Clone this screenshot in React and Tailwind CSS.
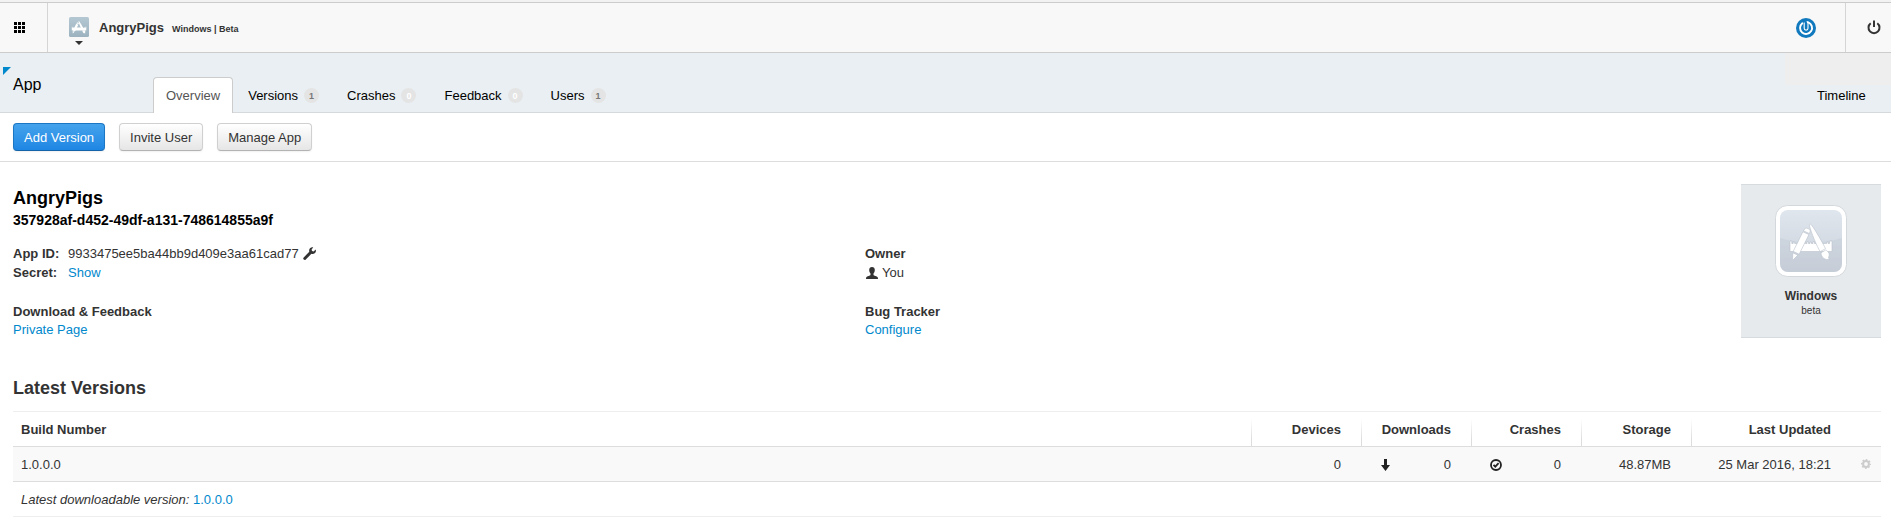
import React from 'react';

function ToolsGlyph({ stroke = 'none' }) {
  return (
    <g fill="#fff" stroke={stroke} strokeWidth="0.6" strokeLinejoin="round">
      <path d="M0 17h1.800v2.500h1.400V18h1.500v1.500H14V18h1.400v1.500h1.600V17.500h1.400v2H20V18h1.400v1.500H23v-2h1.400v2H26V18h1.400v1.500h9.200V18h1.500v1.500h1.500V17H42v10.500H0z" />
      <path d="M12.900 7.800l6 2.800L9.200 30.200l-6-2.800z" />
      <path d="M15.200 4.400c1-1 5.200.9 5.100 2.500L19.400 9.600l-6-2.800z" />
      <path d="M2.800 28.800l5 2.300-4.100 4.200c-.6.5-1.200.1-1.100-.5z" />
      <path d="M20 .2c.6-.3 1 .2 1.400.7 3.300 4 11.900 18.900 14.100 23.800l-5.300 2.900C27.200 23 20.900 8 19.700 2.400c-.2-1-.2-1.900.3-2.200z" />
      <path d="M31 28.800l4.800-2.800c2.600 1.400 4.300 4.100 3 6.600-.5 1.200-.4 2 .9 2.700-4.500 1-8.500-1.500-8.700-6.500z" />
    </g>
  );
}

function AppBadge() {
  return (
    <svg width="20" height="20" viewBox="0 0 20 20" aria-hidden="true">
      <defs>
        <linearGradient id="badge" x1="0" y1="0" x2="0" y2="1">
          <stop offset="0" stopColor="#b4c8d3" />
          <stop offset="1" stopColor="#9cb3bf" />
        </linearGradient>
      </defs>
      <rect width="20" height="20" rx="1.500" fill="url(#badge)" />
      <g transform="translate(2.800 4) scale(0.345)">
        <ToolsGlyph />
      </g>
    </svg>
  );
}

function AppArtwork() {
  return (
    <svg className="block" width="72" height="72" viewBox="0 0 72 72" aria-hidden="true">
      <defs>
        <linearGradient id="art" x1="0" y1="0" x2="0" y2="1">
          <stop offset="0" stopColor="#dfe6ee" />
          <stop offset="1" stopColor="#cbd1da" />
        </linearGradient>
      </defs>
      <rect x="0.5" y="0.5" width="71" height="71" rx="12" fill="#fff" stroke="#d3d8dc" />
      <rect x="5" y="5" width="62" height="62" rx="8" fill="url(#art)" />
      <path d="M5 33q31 9 62 0v26a8 8 0 0 1-8 8H13a8 8 0 0 1-8-8z" fill="#b9c3d0" opacity="0.3" />
      <g transform="translate(15 19)">
        <ToolsGlyph stroke="#b9c1cb" />
      </g>
    </svg>
  );
}

function Tab({ label, count, active }) {
  return (
    <a
      href="#"
      className={
        active
          ? '-mb-px flex h-9 items-center rounded-t border border-b-0 border-[#ccc] bg-white px-3 pt-px text-[#555]'
          : 'flex h-[35px] items-center gap-1.5 px-[13px] pt-0.5 text-black'
      }
    >
      {label}
      {count !== undefined && (
        <span
          className={
            count > 0
              ? 'flex size-[15px] items-center justify-center rounded-full bg-[#e4e4e4] text-[9px] font-bold text-[#777]'
              : 'flex size-[15px] items-center justify-center rounded-full bg-[#e4e4e4] text-[9px] font-bold text-white'
          }
        >
          {count}
        </span>
      )}
    </a>
  );
}

function HeadCell({ children }) {
  return (
    <th
      scope="col"
      className="bg-[linear-gradient(to_bottom,#fff_20%,#ddd_80%)] bg-[length:1px_100%] bg-no-repeat pt-2 pr-5 pb-1.5 text-right"
    >
      {children}
    </th>
  );
}

const plainButton =
  'h-7 rounded border border-[#d0d0d0] border-b-[#b3b3b3] bg-linear-to-b from-white to-[#e6e6e6] px-2.5 pt-0.5 text-[#333] shadow-[0_1px_2px_rgba(0,0,0,0.06)]';

export default function App() {
  return (
    <div className="bg-white font-['Liberation_Sans',Arial,sans-serif] text-[13px] leading-5 text-[#333]">
      <header className="flex h-[53px] border-b border-[#ccc] bg-[#f8f8f8] shadow-[inset_0_2px_0_#f2f2f2,inset_0_3px_0_#ccc]">
        <button type="button" aria-label="All apps" className="mt-[3px] flex w-12 items-center border-r border-[#d5d5d5] pl-3.5">
          <svg width="11" height="11" viewBox="0 0 11 11" fill="#000">
            <path d="M0 0h3v3H0zM4 0h3v3H4zM8 0h3v3H8zM0 4h3v3H0zM4 4h3v3H4zM8 4h3v3H8zM0 8h3v3H0zM4 8h3v3H4zM8 8h3v3H8z" />
          </svg>
        </button>
        <button type="button" aria-label="Switch app" className="mt-[17px] ml-[21px] flex flex-col items-center gap-1 self-start">
          <AppBadge />
          <svg width="8" height="4" viewBox="0 0 8 4" fill="#333">
            <path d="M0 0h8L4 4z" />
          </svg>
        </button>
        <div className="mt-[18px] ml-2.5 flex items-baseline gap-2 self-start font-bold">
          <span>AngryPigs</span>
          <span className="text-[9px]">Windows | Beta</span>
        </div>
        <div className="mt-[3px] ml-auto flex">
          <a href="#" aria-label="Profile" className="flex items-center pr-[29px]">
            <svg width="20" height="20" viewBox="0 0 20 20" fill="none">
              <circle cx="10" cy="10" r="10" fill="#1179bd" />
              <path d="M6.300 5.300a6 6 0 1 0 6-.9l-1.600-.4" stroke="#fff" strokeWidth="1.900" strokeLinecap="round" />
              <path d="M8.200 4.600v5.600a1.900 1.900 0 0 0 3.800 0V5" stroke="#fff" strokeWidth="1.100" />
              <path d="M10 4v6" stroke="#1179bd" strokeWidth="1.800" strokeLinecap="round" />
            </svg>
          </a>
          <button type="button" aria-label="Sign out" className="flex w-[46px] items-center border-l border-[#d5d5d5] pl-[21px]">
            <svg width="14" height="15" viewBox="0 0 14 15" fill="none" stroke="#333" strokeWidth="2">
              <path d="M3.700 3.300a5.500 5.500 0 1 0 6.600 0" />
              <path d="M7 0.500v6.500" />
            </svg>
          </button>
        </div>
      </header>

      <div className="flex h-[60px] border-b border-[#d5d9db] bg-[#e9eff2]">
        <div className="flex w-[153px] items-start pt-3.5 pl-[3px]">
          <svg width="8" height="8" viewBox="0 0 8 8" fill="#0088cc" aria-hidden="true">
            <path d="M0 0h8L0 8z" />
          </svg>
          <h2 className="mt-1.5 ml-0.5 text-base leading-6 text-black">App</h2>
        </div>
        <nav className="flex items-end gap-0.5 self-end">
          <Tab label="Overview" active />
          <Tab label="Versions" count={1} />
          <Tab label="Crashes" count={0} />
          <Tab label="Feedback" count={0} />
          <Tab label="Users" count={1} />
        </nav>
        <div className="ml-auto flex w-[106px] flex-col">
          <div className="h-8 bg-[#eee]" />
          <a href="#" className="pt-px pl-8 text-black">Timeline</a>
        </div>
      </div>

      <div className="flex gap-3.5 border-b border-[#ddd] px-[13px] py-2.5">
        <button
          type="button"
          className="h-7 rounded border border-[#1b76c4] border-b-[#1563a8] bg-linear-to-b from-[#44a3ec] to-[#1d86e3] px-2.5 pt-0.5 text-white shadow-[0_1px_2px_rgba(0,0,0,0.06)]"
        >
          Add Version
        </button>
        <button type="button" className={plainButton}>Invite User</button>
        <button type="button" className={plainButton}>Manage App</button>
      </div>

      <main className="pt-[22px] pr-2.5 pl-[13px]">
        <div className="flex items-start gap-6">
          <section className="flex-1">
            <h1 className="text-lg leading-7 font-bold text-black">AngryPigs</h1>
            <p className="text-sm leading-4 font-bold text-black">357928af-d452-49df-a131-748614855a9f</p>
            <div className="mt-4 grid grid-cols-2">
              <dl className="grid grid-cols-[55px_1fr] leading-[19px]">
                <dt className="font-bold">App ID:</dt>
                <dd className="flex items-center gap-1">
                  9933475ee5ba44bb9d409e3aa61cad77
                  <button type="button" aria-label="Edit app ID">
                    <svg width="13" height="13" viewBox="0 0 13 13" fill="#333">
                      <path d="M10.300.3L8.600 2.400l.4 1.700 1.600.3L12.700 2.500c.5 1.400.1 2.900-1 3.800-.9.700-2.200.9-3.300.5L2.800 12.400a1.400 1.400 0 0 1-2.100-2L6.300 4.800C5.900 3.600 6.200 2.200 7 1.300 7.900.3 9.200-.1 10.300.3z" />
                    </svg>
                  </button>
                </dd>
                <dt className="font-bold">Secret:</dt>
                <dd><a href="#" className="text-[#0088cc]">Show</a></dd>
              </dl>
              <div className="leading-[19px]">
                <h3 className="font-bold">Owner</h3>
                <p className="flex items-center gap-1">
                  <svg width="12" height="12" viewBox="0 0 12 12" fill="#333" className="ml-px" aria-hidden="true">
                    <path d="M6 0C4.200 0 3.200 1.100 3.200 2.800c0 1.600.5 2.900 1.300 3.700v1.400C4.300 8.700.9 9.100.3 10.200c-.2.400-.3 1.200-.3 1.800h12c0-.6-.1-1.400-.3-1.800-.6-1.100-4-1.500-4.200-2.300V6.500c.8-.8 1.300-2.100 1.300-3.700C8.800 1.100 7.800 0 6 0z" />
                  </svg>
                  You
                </p>
              </div>
              <div className="mt-[21px] leading-[18px]">
                <h3 className="font-bold">Download &amp; Feedback</h3>
                <a href="#" className="text-[#0088cc]">Private Page</a>
              </div>
              <div className="mt-[21px] leading-[18px]">
                <h3 className="font-bold">Bug Tracker</h3>
                <a href="#" className="text-[#0088cc]">Configure</a>
              </div>
            </div>
          </section>
          <aside className="flex w-[140px] flex-col items-center border-y border-[#d5dbde] bg-[#e7eaed] pt-5 pb-[19px]">
            <AppArtwork />
            <p className="mt-[11px] text-xs leading-4 font-bold">Windows</p>
            <p className="text-[10px] leading-[14px]">beta</p>
          </aside>
        </div>

        <h2 className="mt-[35px] text-lg leading-7 font-bold">Latest Versions</h2>
        <table className="mt-[9px] w-full table-fixed border-collapse">
          <colgroup>
            <col />
            <col className="w-[110px]" />
            <col className="w-[110px]" />
            <col className="w-[110px]" />
            <col className="w-[110px]" />
            <col className="w-[160px]" />
            <col className="w-[30px]" />
          </colgroup>
          <thead>
            <tr className="border-t border-b border-t-[#eee] border-b-[#ddd]">
              <th scope="col" className="pt-2 pb-1.5 pl-2 text-left">Build Number</th>
              <HeadCell>Devices</HeadCell>
              <HeadCell>Downloads</HeadCell>
              <HeadCell>Crashes</HeadCell>
              <HeadCell>Storage</HeadCell>
              <HeadCell>Last Updated</HeadCell>
              <td />
            </tr>
          </thead>
          <tbody>
            <tr className="border-b border-[#ddd] bg-[#f9f9f9]">
              <td className="pt-2 pb-1.5 pl-2">1.0.0.0</td>
              <td className="pt-2 pr-5 pb-1.5 text-right">0</td>
              <td className="pt-2 pr-5 pb-1.5 pl-5">
                <div className="flex items-center justify-between">
                  <svg width="9" height="12" viewBox="0 0 9 12" fill="#222" aria-hidden="true">
                    <path d="M3 0h3v6h3L4.500 12 0 6h3z" />
                  </svg>
                  0
                </div>
              </td>
              <td className="pt-2 pr-5 pb-1.5 pl-[19px]">
                <div className="flex items-center justify-between">
                  <svg width="12" height="12" viewBox="0 0 12 12" fill="none" stroke="#222" strokeWidth="1.800" aria-hidden="true">
                    <circle cx="6" cy="6" r="5" />
                    <path d="M3.500 5.800l1.800 1.800 3.300-3.400" />
                  </svg>
                  0
                </div>
              </td>
              <td className="pt-2 pr-5 pb-1.5 text-right">48.87MB</td>
              <td className="pt-2 pr-5 pb-1.5 text-right">25 Mar 2016, 18:21</td>
              <td>
                <button type="button" aria-label="Version settings" className="mx-auto block">
                  <svg width="10" height="10" viewBox="0 0 10 10" fill="none" stroke="#ccc">
                    <circle cx="5" cy="5" r="2.900" strokeWidth="2" />
                    <circle cx="5" cy="5" r="4.300" strokeWidth="1.400" strokeDasharray="1.690 1.690" strokeDashoffset="0.845" />
                  </svg>
                </button>
              </td>
            </tr>
            <tr className="border-b border-[#eee]">
              <td colSpan={7} className="pt-2 pb-1.5 pl-2">
                <em>Latest downloadable version:</em>{' '}
                <a href="#" className="text-[#0088cc]">1.0.0.0</a>
              </td>
            </tr>
          </tbody>
        </table>
      </main>
    </div>
  );
}
